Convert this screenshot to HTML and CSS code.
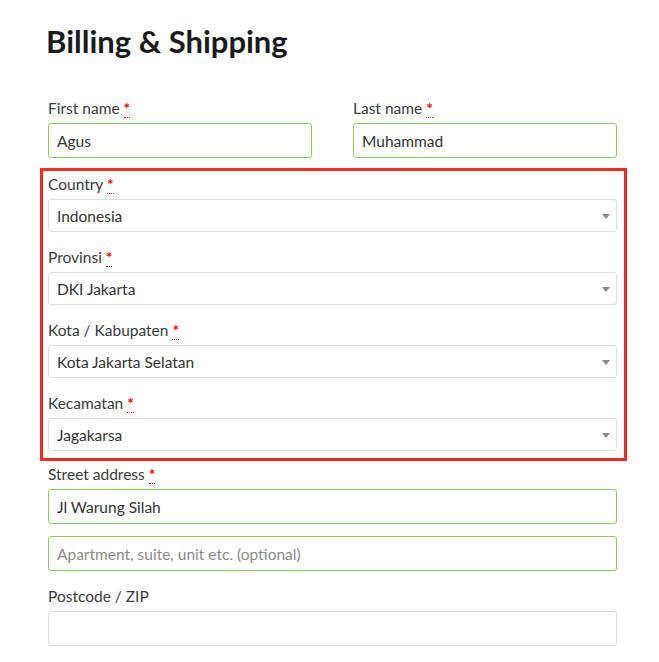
FILE: index.html
```html
<!DOCTYPE html>
<html lang="en">
<head>
    <meta charset="UTF-8">
    <meta name="viewport" content="width=device-width, initial-scale=1.0">
    <title>Billing &amp; Shipping</title>
    <link rel="stylesheet" href="styles.css">
</head>
<body>

<div class="checkout">
    <h3 class="title">Billing &amp; Shipping</h3>

    <div class="row-half">
        <div class="field">
            <label>First name <abbr class="required">*</abbr></label>
            <input type="text" class="input valid" value="Agus">
        </div>
        <div class="field">
            <label>Last name <abbr class="required">*</abbr></label>
            <input type="text" class="input valid" value="Muhammad">
        </div>
    </div>

    <div class="highlight">
        <div class="field">
            <label>Country <abbr class="required">*</abbr></label>
            <div class="select-box"><span>Indonesia</span><span class="arrow"></span></div>
        </div>
        <div class="field">
            <label>Provinsi <abbr class="required">*</abbr></label>
            <div class="select-box"><span>DKI Jakarta</span><span class="arrow"></span></div>
        </div>
        <div class="field">
            <label>Kota / Kabupaten <abbr class="required">*</abbr></label>
            <div class="select-box"><span>Kota Jakarta Selatan</span><span class="arrow"></span></div>
        </div>
        <div class="field">
            <label>Kecamatan <abbr class="required">*</abbr></label>
            <div class="select-box"><span>Jagakarsa</span><span class="arrow"></span></div>
        </div>
    </div>

    <div class="field street">
        <label>Street address <abbr class="required">*</abbr></label>
        <input type="text" class="input valid" value="Jl Warung Silah">
        <input type="text" class="input valid second" placeholder="Apartment, suite, unit etc. (optional)">
    </div>

    <div class="field">
        <label>Postcode / ZIP</label>
        <input type="text" class="input">
    </div>
</div>

</body>
</html>
```

FILE: styles.css
```css
body {
    font-family: 'Lato', sans-serif;
    background-color: #fff;
    color: #333;
    margin: 0;
    padding: 0;
}

.checkout {
    width: 569px;
    padding: 0 0 0 48px;
}

.title {
    font-size: 31px;
    font-weight: 700;
    color: #1a1a1a;
    margin: 0 0 0 -2px;
    padding-top: 21px;
    line-height: 40px;
    height: 76px;
}

.row-half {
    display: flex;
    gap: 41px;
    margin-bottom: 10px;
}

.row-half .field {
    flex: 1;
    margin-bottom: 0;
}

.field {
    display: flex;
    flex-direction: column;
    margin-bottom: 14px;
}

.field label {
    font-size: 15.5px;
    line-height: 22px;
    color: #3a3a3a;
    margin-bottom: 4px;
}

.required {
    color: #f00;
    text-decoration: none;
    border-bottom: 1px dotted #f00;
    font-weight: 700;
}

.input {
    box-sizing: border-box;
    height: 35px;
    padding: 0 8px;
    font-family: 'Lato', sans-serif;
    font-size: 15.5px;
    color: #333;
    border: 1px solid #ddd;
    border-radius: 3px;
    outline: none;
}

.input::placeholder {
    color: #8a8a8a;
}

.input.valid {
    border-color: #85cf5a;
}

.input.second {
    margin-top: 12px;
}

.highlight {
    border: 3px solid #f22a1f;
    margin: 0 -10px 2px -8px;
    padding: 2px 7px 7px 5px;
}

.highlight .field:last-child {
    margin-bottom: 0;
}

.select-box {
    box-sizing: border-box;
    height: 33px;
    display: flex;
    align-items: center;
    justify-content: space-between;
    padding: 0 6px 0 8px;
    font-size: 15.5px;
    color: #333;
    border: 1px solid #ddd;
    border-radius: 3px;
}

.arrow {
    width: 0;
    height: 0;
    border-left: 4px solid transparent;
    border-right: 4px solid transparent;
    border-top: 5px solid #888;
    margin-top: 1px;
}
```
